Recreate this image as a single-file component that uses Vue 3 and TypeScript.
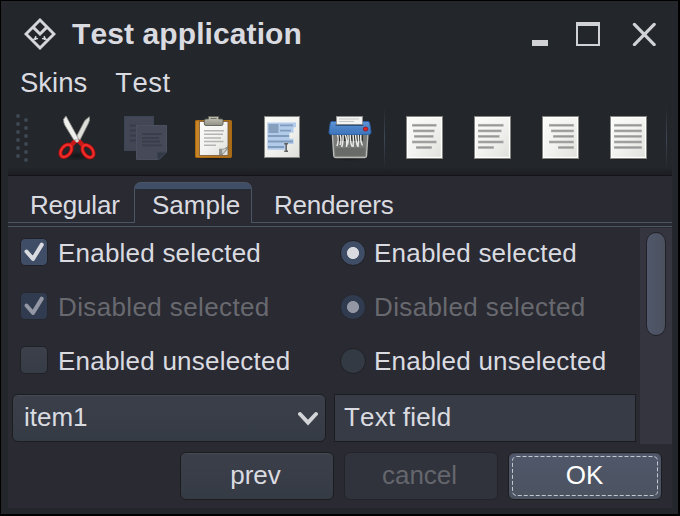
<script setup lang="ts">
import { ref } from 'vue'

interface Option {
  label: string
  on: boolean
  disabled: boolean
}

const menus = ['Skins', 'Test']
const tabs = ['Regular', 'Sample', 'Renderers']
const activeTab = ref('Sample')

const options: Option[] = [
  { label: 'Enabled selected', on: true, disabled: false },
  { label: 'Disabled selected', on: true, disabled: true },
  { label: 'Enabled unselected', on: false, disabled: false },
]

const lineY = [11.3, 16.9, 22.4, 28, 33.5]
const alignIcons: [number, number][][] = [
  [[11, 35.7], [12, 33.7], [13, 32.7], [11, 35.7], [15, 31]],
  [[9, 34.7], [9, 32.7], [9, 30.7], [9, 34.7], [9, 25]],
  [[12, 37], [14, 37], [16, 37], [12, 37], [21, 37]],
  [[9, 37], [9, 37], [9, 37], [9, 37], [9, 37]],
]

const gripDots = [0, 1, 2, 3, 4, 5]
</script>

<template>
  <div class="window">
    <svg class="defs" width="0" height="0">
      <defs>
        <linearGradient id="paper" x1="0" y1="0" x2="1" y2="1">
          <stop offset="0" stop-color="#fbfbf9" />
          <stop offset="0.5" stop-color="#f3f3f1" />
          <stop offset="1" stop-color="#dededa" />
        </linearGradient>
        <linearGradient id="board" x1="0" y1="0" x2="1" y2="0">
          <stop offset="0" stop-color="#c98526" />
          <stop offset="1" stop-color="#a86c1c" />
        </linearGradient>
        <linearGradient id="clip" x1="0" y1="0" x2="0" y2="1">
          <stop offset="0" stop-color="#c9c9bd" />
          <stop offset="1" stop-color="#8f8f84" />
        </linearGradient>
        <linearGradient id="lid" x1="0" y1="0" x2="0" y2="1">
          <stop offset="0" stop-color="#5e93d4" />
          <stop offset="1" stop-color="#3c74bb" />
        </linearGradient>
        <radialGradient id="shade">
          <stop offset="0" stop-color="#000" stop-opacity="0.45" />
          <stop offset="1" stop-color="#000" stop-opacity="0" />
        </radialGradient>
      </defs>
    </svg>

    <header class="titlebar">
      <svg class="logo" viewBox="0 0 32 32">
        <path d="M16 2 L30 16 L16 30 L2 16 Z" fill="none" stroke="#d5d6da" stroke-width="2.9" />
        <path d="M8.6 8.6 L16 16 L23.4 8.6" fill="none" stroke="#d5d6da" stroke-width="2.9" />
        <path d="M8.5 22.8 L12 19.3 M23.5 22.8 L20 19.3" stroke="#d5d6da" stroke-width="1.6" />
        <path d="M10.6 20.6 H14 M21.4 20.6 H18 M11.6 18 V22 M20.4 18 V22" stroke="#d5d6da" stroke-width="1.4" />
      </svg>
      <h1>Test application</h1>
      <div class="controls">
        <svg viewBox="0 0 24 24"><rect x="4" y="18" width="16" height="6" fill="#d0d2d6" /></svg>
        <svg viewBox="0 0 24 24">
          <path d="M0 0 H24 V24 H0 Z M2 4 V22 H22 V4 Z" fill="#d0d2d6" fill-rule="evenodd" />
        </svg>
        <svg class="close" viewBox="0 0 24 24">
          <path d="M2.4 2.4 L22.2 22.6 M22.2 2.4 L2.4 22.6" stroke="#d0d2d6" stroke-width="3.2" stroke-linecap="round" />
        </svg>
      </div>
    </header>

    <nav class="menubar">
      <span v-for="m in menus" :key="m" :class="m.toLowerCase()">{{ m }}</span>
    </nav>

    <div class="toolbar">
      <svg class="grip" viewBox="0 0 14 50">
        <template v-for="n in gripDots" :key="n">
          <circle cx="3" :cy="3 + n * 8" r="2" fill="#3d4752" />
          <circle cx="11" :cy="7 + n * 8" r="2" fill="#3d4752" />
        </template>
      </svg>

      <svg class="tool" viewBox="0 0 48 48">
        <ellipse cx="23" cy="42" rx="15" ry="5" fill="url(#shade)" />
        <ellipse cx="12" cy="36.8" rx="4.6" ry="7" transform="rotate(38 12 36.8)" fill="none" stroke="#a80c0c" stroke-width="4" />
        <ellipse cx="34" cy="37.2" rx="4.6" ry="7" transform="rotate(-38 34 37.2)" fill="none" stroke="#a80c0c" stroke-width="4" />
        <path d="M17.5 31 L22.5 25.5 M28.5 31 L23.5 25.5" stroke="#c81818" stroke-width="4.6" stroke-linecap="round" />
        <ellipse cx="12" cy="36.8" rx="4.6" ry="7" transform="rotate(38 12 36.8)" fill="none" stroke="#ee2d2a" stroke-width="2.3" />
        <ellipse cx="34" cy="37.2" rx="4.6" ry="7" transform="rotate(-38 34 37.2)" fill="none" stroke="#ee2d2a" stroke-width="2.3" />
        <path d="M35.3 2.7 Q36.2 6 34.6 9 L26 26 L21.7 24 L30.8 6.5 Z" fill="#dededb" stroke="#8c8c86" stroke-width="0.8" />
        <path d="M12 2 L9.6 5.2 Q9.2 8.5 11 11.5 L20 26.3 L24.6 25 Z" fill="#efefed" stroke="#8c8c86" stroke-width="0.8" />
        <circle cx="23" cy="26.8" r="1.8" fill="#d8d8d5" />
      </svg>

      <svg class="tool" viewBox="0 0 48 48">
        <rect x="2.5" y="2.5" width="29" height="34" fill="#434755" stroke="#3b4452" />
        <path d="M8 11.5 H14 M8 16.5 H14 M8 21.5 H14 M8 26.5 H14" stroke="#373c48" stroke-width="1.8" />
        <path d="M14.5 11.5 H44.5 V38 L37 45.5 H14.5 Z" fill="#454958" stroke="#4a5060" />
        <path d="M20 20 H40 M20 24 H37 M20 27.5 H38 M20 31.3 H40" stroke="#393e4a" stroke-width="1.8" />
        <path d="M35.5 38.3 H44.5 L36 45.5 Z" fill="#323844" stroke="#3b4250" stroke-width="0.8" />
      </svg>

      <svg class="tool" viewBox="0 0 48 48">
        <ellipse cx="23" cy="44" rx="20" ry="2.5" fill="url(#shade)" />
        <rect x="5.5" y="6.5" width="36" height="37" rx="0.8" fill="url(#board)" stroke="#a8690f" />
        <rect x="9.5" y="7.5" width="28.5" height="34" fill="url(#paper)" stroke="#74583a" stroke-width="0.8" />
        <path d="M14 16.8 H34 M14 20.3 H33 M14 24 H31 M14 27.5 H33.5 M14 31.2 H26" stroke="#b4b4b1" stroke-width="1.6" />
        <path d="M29.5 35 Q35 36 37.5 32.5 L37.5 35 L32 41 H29.5 Z" fill="#8f928d" stroke="#777974" stroke-width="0.6" />
        <path d="M32 35.8 L36.8 34.5 L32.5 40 Z" fill="#d0d0cc" />
        <path d="M18.5 5 V2.5 H28.7 V5 H32 Q33 5 33 6.5 V10 Q33 11.5 31 11.5 H16 Q14.3 11.5 14.3 10 V6.5 Q14.3 5 16 5 Z" fill="url(#clip)" stroke="#5e5e56" stroke-width="0.9" />
        <path d="M20.5 4.4 H26.7" stroke="#5e5e56" stroke-width="0.9" />
      </svg>

      <svg class="tool" viewBox="0 0 48 48">
        <rect x="6.5" y="2.5" width="35" height="41" fill="url(#paper)" stroke="#85867f" />
        <path d="M9.3 8.5 H38 V13.2 H35.5 V18.8 H31.5 V24.8 H35.5 V30 H29 V35.8 H9.3 Z" fill="#b2cbea" />
        <rect x="10.5" y="10" width="10" height="9" fill="#859fbd" />
        <path d="M22 11.3 H35 M22 16.7 H33 M10 22 H31 M10 27.5 H35 M10 33 H26" stroke="#819bbc" stroke-width="1.8" />
        <path d="M26.3 29.8 H30 M28.2 30 V37 M26.3 37.3 H30" stroke="#5f5f5d" stroke-width="1.5" />
      </svg>

      <svg class="tool" viewBox="0 0 48 48">
        <ellipse cx="24" cy="44" rx="21" ry="3" fill="url(#shade)" />
        <path d="M6.3 19 H42 L40.5 42 Q40.4 43.5 39 43.5 H9.4 Q8 43.5 7.8 42 Z" fill="#777976" stroke="#b8bab7" stroke-width="1.4" />
        <path d="M9.4 34 H38.8 V41.8 H9.4 Z" fill="#686b68" />
        <path d="M11 20 H37 V27 H11 Z" fill="#2f3130" />
        <path d="M11.5 20 Q13 27 11 32 M14 20 Q16 27 14 31 M17 20 Q17.5 28 15.7 33 M19 20 Q21.5 27 20.5 33 M21.7 20 Q23 28 21 31 M24.3 20 Q24 28 26 32.5 M27 20 Q28 27 27 33 M29.5 20 Q30 28 31.5 32 M32.2 20 Q33 27 32 33 M35 20 Q34 27 36.5 31.5" fill="none" stroke="#e8e8e6" stroke-width="1.5" />
        <path d="M5.5 7.5 H42 Q43.4 7.7 43.7 9.5 L45 18 Q45.2 20.3 43.2 20.5 H4.8 Q2.7 20.3 3 18 L4.2 9.5 Q4.4 7.8 5.5 7.5 Z" fill="url(#lid)" stroke="#2c62a8" stroke-width="0.9" />
        <rect x="10.5" y="2.5" width="26" height="8" fill="#f4f4f2" stroke="#8f9290" stroke-width="0.9" />
        <path d="M13 5 H33 M13 7.5 H28" stroke="#c6c6c4" />
        <path d="M9.5 11.3 H37.5" stroke="#233d63" stroke-width="0.9" />
        <ellipse cx="39.6" cy="15" rx="2.4" ry="2" fill="#e42323" stroke="#7e1625" stroke-width="0.7" />
      </svg>

      <i class="separator" />

      <svg v-for="(lines, i) in alignIcons" :key="i" class="tool" viewBox="0 0 48 48">
        <ellipse cx="23.5" cy="44.5" rx="22" ry="2" fill="url(#shade)" />
        <rect x="5.5" y="2.5" width="36" height="42" fill="url(#paper)" stroke="#85867f" />
        <rect x="6.6" y="3.6" width="33.8" height="39.8" fill="none" stroke="#fff" stroke-width="1.1" />
        <template v-for="(l, j) in lines" :key="j">
          <path :d="`M${l[0]} ${lineY[j]} H${l[1]}`" stroke="#bcbcba" stroke-width="2.8" />
          <path :d="`M${l[0] + 0.5} ${lineY[j]} H${l[1] - 0.7}`" stroke="#979797" stroke-width="1.5" />
        </template>
      </svg>

      <i class="separator last" />
    </div>

    <main class="content">
      <div class="tabs">
        <div v-for="t in tabs" :key="t" class="tab" :class="[t.toLowerCase(), { active: t === activeTab }]">
          <span>{{ t }}</span>
        </div>
      </div>

      <section class="pane">
        <div class="form">
          <div v-for="o in options" :key="o.label" class="option-row">
            <div class="option" :class="{ disabled: o.disabled }">
              <span class="check" :class="{ on: o.on }">
                <svg v-if="o.on" viewBox="0 0 26 26">
                  <path d="M5.5 12.5 L12 20 L20.8 5.6" fill="none" stroke="currentColor" stroke-width="4" stroke-linecap="round" stroke-linejoin="round" />
                </svg>
              </span>
              <span class="label">{{ o.label }}</span>
            </div>
            <div class="option" :class="{ disabled: o.disabled }">
              <span class="radio" :class="{ on: o.on }" />
              <span class="label">{{ o.label }}</span>
            </div>
          </div>
          <div class="fields">
            <div class="combo">
              <span>item1</span>
              <svg viewBox="0 0 20 16">
                <path d="M2 3 L10 11.5 L18 3" fill="none" stroke="#d2d4d8" stroke-width="4" stroke-linecap="round" />
              </svg>
            </div>
            <div class="textfield">Text field</div>
          </div>
        </div>
        <div class="scrollbar"><div class="thumb" /></div>
      </section>

      <footer class="actions">
        <div class="button">prev</div>
        <div class="button off">cancel</div>
        <div class="button primary">
          <span>OK</span>
          <svg class="focus" viewBox="0 0 146 40">
            <rect x="0.5" y="0.5" width="145" height="39" rx="4" fill="none" stroke="#c3c7d0" stroke-dasharray="4 2" />
          </svg>
        </div>
      </footer>
    </main>
  </div>
</template>

<style>
body {
  margin: 0;
  background: #000;
}
</style>

<style scoped>
.window {
  box-sizing: border-box;
  width: 680px;
  height: 516px;
  border: solid #000;
  border-width: 1px 2px 2px 1px;
  padding: 0 6px 6px 7px;
  background: #23262a;
  color: #dadbe0;
  font: 26px 'Liberation Sans', Arial, sans-serif;
  font-kerning: none;
  display: flex;
  flex-direction: column;
  overflow: hidden;
}
.window * {
  box-sizing: border-box;
}
.defs {
  flex: none;
  display: block;
}
.titlebar {
  height: 66px;
  flex: none;
  display: flex;
  align-items: center;
  padding: 0 16px 0 16px;
}
.logo {
  width: 32px;
  height: 32px;
}
h1 {
  margin: 0 0 0 16px;
  font-size: 30px;
  line-height: 34px;
  font-weight: bold;
  letter-spacing: 0.1px;
}
.controls {
  margin-left: auto;
  display: flex;
  gap: 24px;
}
.controls svg {
  width: 24px;
  height: 24px;
}
.controls .close {
  margin-left: 8px;
}
.menubar {
  height: 33px;
  flex: none;
  display: flex;
  align-items: center;
  gap: 28px;
  padding: 0 0 2px 12px;
  font-size: 27.5px;
}
.menubar .test {
  letter-spacing: 0.5px;
}
.toolbar {
  height: 76px;
  flex: none;
  display: flex;
  align-items: center;
  padding: 0 0 0 7px;
  border-bottom: 1px solid #131417;
  background: linear-gradient(#23262a 90%, #1b1d20);
}
.grip {
  width: 14px;
  height: 50px;
  margin-right: 15px;
}
.tool {
  width: 48px;
  height: 48px;
  margin: 0 10px;
  flex: none;
}
.separator {
  width: 1px;
  height: 64px;
  margin: 0 6px 0 0;
  background: linear-gradient(#23262a, #3f4856 50%, #23262a);
}
.separator.last {
  margin: 0 0 0 3px;
}
.content {
  flex: 1;
  min-height: 0;
  background: #2a2a32;
  display: flex;
  flex-direction: column;
}
.tabs {
  height: 51px;
  flex: none;
  display: flex;
  align-items: flex-end;
  padding-bottom: 3px;
  border-bottom: 1px solid #4b5665;
}
.tab {
  height: 41px;
  padding: 8px 0 0 22px;
  line-height: 30px;
  letter-spacing: -0.2px;
  border-bottom: 1px solid #4b5665;
}
.tab.regular {
  width: 126px;
}
.tab.active {
  width: 118px;
  padding: 7px 0 0 17px;
  letter-spacing: 0;
  border: 1px solid #4b5665;
  border-bottom: 0;
  border-radius: 7px 7px 0 0;
  background: linear-gradient(#3f4d66 6px, #2a2a32 6px);
}
.tab.renderers {
  flex: 1;
}
.pane {
  height: 217px;
  flex: none;
  display: flex;
  padding-top: 1px;
}
.form {
  flex: 1;
  padding: 0 4px;
  margin-top: -2px;
}
.option-row {
  height: 54px;
  display: flex;
}
.option {
  display: flex;
  align-items: center;
}
.option:first-child {
  width: 320px;
  padding-left: 9px;
}
.option:last-child {
  padding-left: 8px;
}
.check,
.radio {
  width: 26px;
  height: 26px;
  border: 1px solid #202126;
  border-radius: 5px;
  background: linear-gradient(#3c404b, #363c46);
}
.check {
  width: 28px;
  height: 28px;
  margin: 0 10px 2px -1px;
}
.check.on {
  background: #3f4d66;
}
.check svg {
  display: block;
  width: 26px;
  height: 26px;
}
.radio {
  border-radius: 50%;
  margin: 0 8px 0 0;
  background: #343a43;
}
.radio.on {
  background: radial-gradient(circle, #dadbe0 5.6px, #3f4d66 6.4px);
}
.label {
  letter-spacing: 0.22px;
}
.disabled .label {
  color: #68696f;
  letter-spacing: 0.38px;
}
.disabled .check {
  background: #303b50;
  border-color: #262830;
  color: #9397a3;
}
.disabled .radio {
  background: radial-gradient(circle, #9397a3 5.6px, #303b50 6.4px);
  border-color: #262830;
}
.fields {
  display: flex;
  gap: 8px;
  padding-top: 6px;
}
.combo,
.textfield {
  height: 48px;
  border: 1px solid #1b1d21;
  display: flex;
  align-items: center;
  padding-bottom: 1px;
}
.combo {
  width: 314px;
  border-radius: 6px;
  padding: 0 7px 1px 11px;
  justify-content: space-between;
  background: linear-gradient(#3b3f4a, #353b45);
  box-shadow: inset 0 1px #464a54;
}
.combo svg {
  width: 20px;
  height: 16px;
  margin-top: 3px;
}
.textfield {
  width: 302px;
  padding-left: 9px;
  letter-spacing: 0.2px;
  background: #373b46;
}
.scrollbar {
  width: 32px;
  padding: 4px 6px;
  background: #35353f;
}
.thumb {
  width: 20px;
  height: 104px;
  border: 1px solid #1f2126;
  border-radius: 10px;
  background: linear-gradient(90deg, #50576a, #4b515e);
}
.actions {
  display: flex;
  justify-content: flex-end;
  gap: 10px;
  padding: 8px 10px 0 0;
}
.button {
  width: 154px;
  height: 48px;
  border: 1px solid #1b1d21;
  border-radius: 6px;
  background: linear-gradient(#3b3f4a, #353b45);
  box-shadow: inset 0 1px #464a54;
  display: flex;
  align-items: center;
  justify-content: center;
  padding: 0 3px 2px 0;
}
.button.off {
  color: #64666d;
  background: #30333b;
  border-color: #222429;
  box-shadow: none;
}
.button.primary {
  position: relative;
  padding-right: 1px;
  color: #fff;
  background: linear-gradient(#50576a, #4b5360);
}
.focus {
  position: absolute;
  left: 3px;
  top: 3px;
  width: 146px;
  height: 40px;
}
</style>
